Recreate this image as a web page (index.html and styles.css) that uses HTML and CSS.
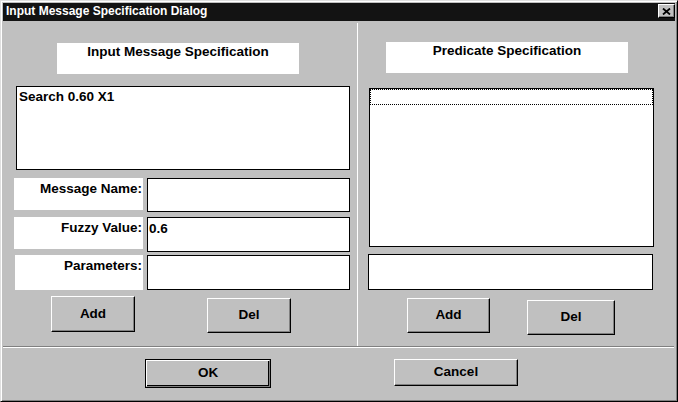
FILE: index.html
```html
<!DOCTYPE html>
<html>
  <head>
    <title>Input Message Specification Dialog</title>
    <link rel="stylesheet" href="styles.css">
  </head>
  <body>
    <div class="window">
      <div class="titlebar">
        <span class="title">Input Message Specification Dialog</span>
        <div class="close-btn">
          <svg width="9" height="7" viewBox="0 0 9 7">
            <path d="M1 0.5 L8 6.5 M8 0.5 L1 6.5" stroke="#000" stroke-width="1.8" fill="none"/>
          </svg>
        </div>
      </div>
      <div class="panes">
        <div class="pane pane-left">
          <div class="heading heading-left">Input Message Specification</div>
          <div class="listbox listbox-left">
            <div class="list-item">Search 0.60 X1</div>
          </div>
          <div class="field-row row-first">
            <div class="field-label label-short">Message Name:</div>
            <div class="field-input"></div>
          </div>
          <div class="field-row row-second">
            <div class="field-label label-short">Fuzzy Value:</div>
            <div class="field-input">0.6</div>
          </div>
          <div class="field-row row-third">
            <div class="field-label">Parameters:</div>
            <div class="field-input"></div>
          </div>
          <div class="button-row button-row-left">
            <div class="btn btn-add-left">Add</div>
            <div class="btn btn-del-left">Del</div>
          </div>
        </div>
        <div class="divider"></div>
        <div class="pane pane-right">
          <div class="heading heading-right">Predicate Specification</div>
          <div class="listbox listbox-right">
            <div class="focus-item"></div>
          </div>
          <div class="field-input predicate-input"></div>
          <div class="button-row button-row-right">
            <div class="btn btn-add-right">Add</div>
            <div class="btn btn-del-right">Del</div>
          </div>
        </div>
      </div>
      <div class="separator"></div>
      <div class="footer">
        <div class="btn btn-default btn-ok">OK</div>
        <div class="btn btn-cancel">Cancel</div>
      </div>
    </div>
  </body>
</html>
```

FILE: styles.css
```css
body, div, span {
  margin: 0;
  padding: 0;
}
body {
  width: 678px;
  height: 402px;
  overflow: hidden;
  background: #c0c0c0;
  font-family: 'Liberation Sans', Arial, sans-serif;
  font-weight: bold;
  font-size: 13.5px;
  color: #000;
}

.window {
  width: 678px;
  height: 402px;
  box-sizing: border-box;
  background: #c0c0c0;
  border: 1px solid;
  border-color: #dfdfdf #000 #000 #dfdfdf;
  box-shadow: inset 1px 1px #fff, inset -1px -1px #808080;
  padding: 2px;
  display: flex;
  flex-direction: column;
}

.titlebar {
  height: 18px;
  background: #131313;
  color: #fff;
  display: flex;
  align-items: flex-start;
  justify-content: space-between;
}
.title {
  font-size: 12px;
  line-height: 17px;
  padding-left: 3px;
}
.close-btn {
  width: 17px;
  height: 14px;
  margin: 1px 0 0 0;
  box-sizing: border-box;
  background: #c0c0c0;
  border: 1px solid;
  border-color: #fff #000 #000 #fff;
  box-shadow: inset -1px -1px #808080;
  display: flex;
  align-items: center;
  justify-content: center;
}

.panes {
  height: 325px;
  display: flex;
}
.pane {
  display: flex;
  flex-direction: column;
  align-items: flex-start;
}
.pane-left {
  width: 354px;
}
.pane-right {
  flex: 1;
}
.divider {
  width: 1px;
  margin-top: 2px;
  background: #fff;
}

.heading {
  background: #fff;
  text-align: center;
  line-height: 15px;
  padding-top: 1px;
  box-sizing: border-box;
}
.heading-left {
  width: 242px;
  height: 31px;
  margin: 22px 0 0 54px;
}
.heading-right {
  width: 242px;
  height: 31px;
  margin: 21px 0 0 28px;
}

.listbox {
  background: #fff;
  border: 1px solid #000;
  box-sizing: border-box;
}
.listbox-left {
  width: 334px;
  height: 84px;
  margin: 12px 0 0 13px;
}
.list-item {
  line-height: 15px;
  padding: 2px 2px 0 2px;
}
.listbox-right {
  width: 285px;
  height: 159px;
  margin: 15px 0 0 11px;
}
.focus-item {
  height: 16px;
  box-sizing: border-box;
  border: 1px dotted #000;
}

.field-row {
  display: flex;
  gap: 4px;
  margin-left: 11px;
  align-items: flex-start;
}
.row-first {
  height: 34px;
  margin-top: 8px;
}
.row-second {
  height: 35px;
  margin-top: 5px;
}
.row-third {
  height: 35px;
  margin-top: 3px;
  align-items: stretch;
}
.field-label {
  width: 129px;
  height: 35px;
  box-sizing: border-box;
  background: #fff;
  text-align: right;
  line-height: 15px;
  padding: 3px 1px 0 0;
}
.row-third .field-label {
  margin-left: 1px;
  width: 128px;
}
.label-short {
  height: 32px;
}
.field-input {
  width: 203px;
  height: 100%;
  box-sizing: border-box;
  background: #fff;
  border: 1px solid #000;
  line-height: 15px;
  padding: 3px 1px 0 1px;
}
.predicate-input {
  width: 285px;
  height: 36px;
  margin: 7px 0 0 10px;
}

.button-row {
  display: flex;
  align-items: flex-start;
}
.button-row-left {
  margin: 6px 0 0 48px;
}
.button-row-right {
  margin: 8px 0 0 49px;
}
.btn {
  box-sizing: border-box;
  background: #c0c0c0;
  border: 1px solid;
  border-color: #fff #000 #000 #fff;
  box-shadow: inset -1px -1px #808080;
  display: flex;
  align-items: center;
  justify-content: center;
  padding-bottom: 2px;
}
.btn-add-left {
  width: 84px;
  height: 36px;
}
.btn-del-left {
  width: 84px;
  height: 35px;
  margin: 2px 0 0 72px;
}
.btn-add-right {
  width: 83px;
  height: 35px;
}
.btn-del-right {
  width: 88px;
  height: 35px;
  margin: 2px 0 0 37px;
}

.separator {
  width: 671px;
  border-top: 1px solid #808080;
  border-bottom: 1px solid #fff;
}

.footer {
  display: flex;
  align-items: flex-start;
  padding-top: 11px;
}
.btn-ok {
  width: 124px;
  height: 27px;
  margin: 1px 0 0 143px;
}
.btn-default {
  border-color: #fff #808080 #808080 #fff;
  box-shadow: 0 0 0 1px #000, inset -1px -1px #000;
}
.btn-cancel {
  width: 124px;
  height: 27px;
  margin-left: 124px;
}
```
